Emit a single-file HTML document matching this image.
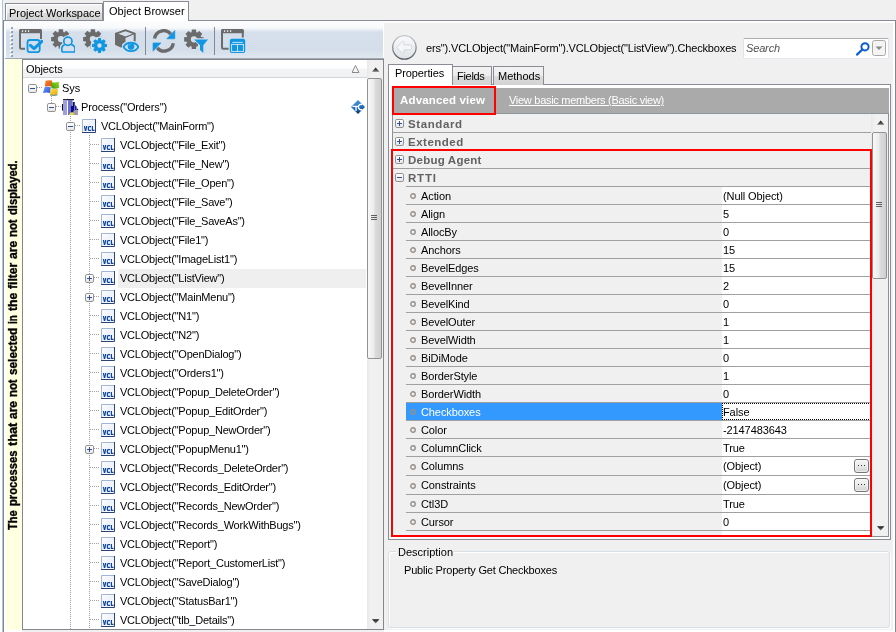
<!DOCTYPE html>
<html><head><meta charset="utf-8"><style>
html,body{margin:0;padding:0;}
body{width:896px;height:632px;position:relative;overflow:hidden;will-change:transform;background:#f0f0f0;font-family:"Liberation Sans", sans-serif;font-size:11px;color:#000;}
body div{position:absolute;}
.t{white-space:nowrap;}
</style></head><body>
<div style="left:0px;top:0px;width:2px;height:632px;background:#ffffff"></div>
<div style="left:2px;top:0px;width:1px;height:632px;background:#a9c7ec"></div>
<div style="left:5px;top:3px;width:98px;height:18px;border:1px solid #898c95;border-bottom:none;box-sizing:border-box;background:linear-gradient(#f3f3f3,#ececec 50%,#dddddd 51%,#d2d2d2);box-shadow:inset 1px 1px 0 #fff"></div>
<div class="t" style="left:9px;top:4px;line-height:18px;letter-spacing:-0.03px">Project Workspace</div>
<div style="left:103px;top:1px;width:86px;height:20px;border:1px solid #898c95;border-bottom:none;box-sizing:border-box;background:#fff"></div>
<div class="t" style="left:109px;top:2px;line-height:18px;letter-spacing:0.03px">Object Browser</div>
<div style="left:3px;top:20px;width:100px;height:1px;background:#898c95"></div>
<div style="left:188px;top:20px;width:708px;height:1px;background:#898c95"></div>
<div style="left:3px;top:20px;width:1px;height:612px;background:#828790"></div>
<div style="left:4px;top:21px;width:1px;height:611px;background:#fff"></div>
<div style="left:4px;top:21px;width:380px;height:38px;background:#fff"></div>
<div style="left:6px;top:21px;width:377px;height:37px;background:linear-gradient(#fcfdfe 0px,#f7f9fb 7px,#e6ecf3 9px,#d6e0ec 11px,#d3deea 28px,#dfe6ef 37px)"></div>
<div style="left:5px;top:58px;width:379px;height:1px;background:#a3a9b3"></div>
<div style="left:10px;top:26px;width:2px;height:2px;background:#ffffff"></div>
<div style="left:11px;top:27px;width:2px;height:2px;background:#98a2b0"></div>
<div style="left:10px;top:30px;width:2px;height:2px;background:#ffffff"></div>
<div style="left:11px;top:31px;width:2px;height:2px;background:#98a2b0"></div>
<div style="left:10px;top:34px;width:2px;height:2px;background:#ffffff"></div>
<div style="left:11px;top:35px;width:2px;height:2px;background:#98a2b0"></div>
<div style="left:10px;top:38px;width:2px;height:2px;background:#ffffff"></div>
<div style="left:11px;top:39px;width:2px;height:2px;background:#98a2b0"></div>
<div style="left:10px;top:42px;width:2px;height:2px;background:#ffffff"></div>
<div style="left:11px;top:43px;width:2px;height:2px;background:#98a2b0"></div>
<div style="left:10px;top:46px;width:2px;height:2px;background:#ffffff"></div>
<div style="left:11px;top:47px;width:2px;height:2px;background:#98a2b0"></div>
<div style="left:10px;top:50px;width:2px;height:2px;background:#ffffff"></div>
<div style="left:11px;top:51px;width:2px;height:2px;background:#98a2b0"></div>
<div style="left:10px;top:54px;width:2px;height:2px;background:#ffffff"></div>
<div style="left:11px;top:55px;width:2px;height:2px;background:#98a2b0"></div>
<div style="left:145px;top:27px;width:1px;height:28px;background:#7f8a98"></div>
<div style="left:214px;top:27px;width:1px;height:28px;background:#7f8a98"></div>
<svg style="position:absolute;left:19px;top:29px;" width="24" height="24" viewBox="0 0 24 24"><path d="M6,19.8 H2.5 Q1,19.8 1,18.3 V2.5 Q1,1 2.5,1 H20.5 Q22,1 22,2.5 V10" fill="none" stroke="#6b6b6b" stroke-width="2"/><rect x="0" y="0" width="23" height="4.2" rx="1.5" fill="#6b6b6b"/><circle cx="3.6" cy="2.1" r="0.8" fill="#fff"/><circle cx="6.6" cy="2.1" r="0.8" fill="#fff"/><circle cx="9.6" cy="2.1" r="0.8" fill="#fff"/><rect x="8.5" y="11" width="12.2" height="12.2" rx="2.5" fill="none" stroke="#1196e3" stroke-width="1.8"/><polyline points="11.4,16.4 15.1,19.6 22.8,12.3" fill="none" stroke="#1196e3" stroke-width="3.1" stroke-linecap="round" stroke-linejoin="round"/></svg>
<svg style="position:absolute;left:51px;top:29px;" width="24" height="24" viewBox="0 0 24 24"><path d="M17.02,7.74 L19.67,7.97 L19.67,12.23 L17.02,12.46 L16.60,13.47 L18.32,15.50 L15.30,18.52 L13.27,16.80 L12.26,17.22 L12.03,19.87 L7.77,19.87 L7.54,17.22 L6.53,16.80 L4.50,18.52 L1.48,15.50 L3.20,13.47 L2.78,12.46 L0.13,12.23 L0.13,7.97 L2.78,7.74 L3.20,6.73 L1.48,4.70 L4.50,1.68 L6.53,3.40 L7.54,2.98 L7.77,0.33 L12.03,0.33 L12.26,2.98 L13.27,3.40 L15.30,1.68 L18.32,4.70 L16.60,6.73 Z M6.80,10.10 a3.1,3.1 0 1,0 6.2,0 a3.1,3.1 0 1,0 -6.2,0 Z" fill="#6b6b6b" fill-rule="evenodd"/><circle cx="16.9" cy="12.2" r="6" fill="#d6e0ec"/><path d="M8.8,25 V19.5 Q8.8,14.5 13,14 H21 Q25.5,14.5 25.5,19.5 V25 Z" fill="#d6e0ec"/><circle cx="16.9" cy="12.2" r="4.1" fill="none" stroke="#1196e3" stroke-width="1.7"/><path d="M13.6,15.7 Q10.8,16.6 10.8,19.8 V21.3 Q10.8,23 12.4,23 H22.4 Q24,23 24,21.3 V19.8 Q24,16.6 20.2,15.7" fill="none" stroke="#1196e3" stroke-width="1.7" stroke-linejoin="round"/></svg>
<svg style="position:absolute;left:83px;top:29px;" width="24" height="24" viewBox="0 0 24 24"><path d="M17.02,7.74 L19.67,7.97 L19.67,12.23 L17.02,12.46 L16.60,13.47 L18.32,15.50 L15.30,18.52 L13.27,16.80 L12.26,17.22 L12.03,19.87 L7.77,19.87 L7.54,17.22 L6.53,16.80 L4.50,18.52 L1.48,15.50 L3.20,13.47 L2.78,12.46 L0.13,12.23 L0.13,7.97 L2.78,7.74 L3.20,6.73 L1.48,4.70 L4.50,1.68 L6.53,3.40 L7.54,2.98 L7.77,0.33 L12.03,0.33 L12.26,2.98 L13.27,3.40 L15.30,1.68 L18.32,4.70 L16.60,6.73 Z M6.80,10.10 a3.1,3.1 0 1,0 6.2,0 a3.1,3.1 0 1,0 -6.2,0 Z" fill="#6b6b6b" fill-rule="evenodd"/><circle cx="16.5" cy="16.5" r="9" fill="#d6e0ec"/><path d="M21.81,14.73 L23.97,15.11 L23.97,17.89 L21.81,18.27 L21.51,19.01 L22.77,20.80 L20.80,22.77 L19.01,21.51 L18.27,21.81 L17.89,23.97 L15.11,23.97 L14.73,21.81 L13.99,21.51 L12.20,22.77 L10.23,20.80 L11.49,19.01 L11.19,18.27 L9.03,17.89 L9.03,15.11 L11.19,14.73 L11.49,13.99 L10.23,12.20 L12.20,10.23 L13.99,11.49 L14.73,11.19 L15.11,9.03 L17.89,9.03 L18.27,11.19 L19.01,11.49 L20.80,10.23 L22.77,12.20 L21.51,13.99 Z M14.30,16.50 a2.2,2.2 0 1,0 4.4,0 a2.2,2.2 0 1,0 -4.4,0 Z" fill="#1196e3" fill-rule="evenodd"/></svg>
<svg style="position:absolute;left:115px;top:29px;" width="24" height="24" viewBox="0 0 24 24"><path d="M10.5,0.3 L20.7,4.1 L20.7,12.5 L18.7,12.5 L18.7,5.6 L10.5,8.9 L2,5.6 L2,14.2 L10.5,17.6 L5.8,18.6 L0,15.8 L0,4.1 Z" fill="#6b6b6b"/><path d="M10.5,2.3 L17.5,4.8 L10.5,7.4 L3.3,4.8 Z" fill="#d6e0ec"/><path d="M0,4.1 L10.5,8 L10.5,13 L8,14.5 L6,17.5 L0,15.8 Z" fill="#6b6b6b"/><ellipse cx="16" cy="17.9" rx="9" ry="6.2" fill="#d6e0ec"/><path d="M8.6,17.9 C11.2,12.3 20.8,12.3 23.4,17.9 C20.8,23.5 11.2,23.5 8.6,17.9 Z" fill="none" stroke="#1196e3" stroke-width="1.9"/><circle cx="16" cy="17.6" r="3.3" fill="#1196e3"/><path d="M13.8,16.8 Q14.2,15.2 15.8,14.8" fill="none" stroke="#7cc3ef" stroke-width="0.6"/></svg>
<svg style="position:absolute;left:152px;top:29px;" width="24" height="24" viewBox="0 0 24 24"><path d="M2.5,9.6 A9.2,9.2 0 0 1 18.8,5.2" fill="none" stroke="#6b6b6b" stroke-width="3.4"/><path d="M22.8,1.5 L22.8,9.8 L14.8,9.8 Z" fill="#1196e3" stroke="#1196e3" stroke-width="0.6" stroke-linejoin="round"/><path d="M21.3,14.2 A9.2,9.2 0 0 1 5.2,18.8" fill="none" stroke="#6b6b6b" stroke-width="3.4"/><path d="M1,13.9 L9,13.9 L1,22.2 Z" fill="#1196e3" stroke="#1196e3" stroke-width="0.6" stroke-linejoin="round"/></svg>
<svg style="position:absolute;left:184px;top:29px;" width="25" height="25" viewBox="0 0 25 25"><path d="M17.02,7.94 L19.67,8.17 L19.67,12.43 L17.02,12.66 L16.60,13.67 L18.32,15.70 L15.30,18.72 L13.27,17.00 L12.26,17.42 L12.03,20.07 L7.77,20.07 L7.54,17.42 L6.53,17.00 L4.50,18.72 L1.48,15.70 L3.20,13.67 L2.78,12.66 L0.13,12.43 L0.13,8.17 L2.78,7.94 L3.20,6.93 L1.48,4.90 L4.50,1.88 L6.53,3.60 L7.54,3.18 L7.77,0.53 L12.03,0.53 L12.26,3.18 L13.27,3.60 L15.30,1.88 L18.32,4.90 L16.60,6.93 Z M6.80,10.30 a3.1,3.1 0 1,0 6.2,0 a3.1,3.1 0 1,0 -6.2,0 Z" fill="#6b6b6b" fill-rule="evenodd"/><path d="M8.2,9.3 L25,9.3 L20.5,15.5 L20.5,25 L14,19.5 L14,15.5 Z" fill="#d6e0ec"/><path d="M10.2,10.5 L24,10.5 L19.3,16.2 L19.3,24 L16,21 L16,16.2 Z" fill="#1196e3"/></svg>
<svg style="position:absolute;left:221px;top:29px;" width="25" height="25" viewBox="0 0 25 25"><path d="M7.6,19.7 H2.5 Q1,19.7 1,18.2 V2.5 Q1,1 2.5,1 H20.3 Q21.8,1 21.8,2.5 V8.6" fill="none" stroke="#6b6b6b" stroke-width="2"/><rect x="0" y="0" width="22.8" height="4.2" rx="1.5" fill="#6b6b6b"/><circle cx="3.6" cy="2.1" r="0.8" fill="#fff"/><circle cx="6.6" cy="2.1" r="0.8" fill="#fff"/><circle cx="9.6" cy="2.1" r="0.8" fill="#fff"/><rect x="8.8" y="9.8" width="15.4" height="14.2" rx="2" fill="#1196e3"/><rect x="11.3" y="12.9" width="10.4" height="0.9" fill="#d8ecf9"/><rect x="10.6" y="15.4" width="11.8" height="7" fill="none" stroke="#d8ecf9" stroke-width="0.9"/><rect x="16" y="15.4" width="0.9" height="7" fill="#d8ecf9"/></svg>
<div style="left:5px;top:59px;width:17px;height:573px;background:#fff"></div>
<div style="left:6px;top:59px;width:16px;height:571px;background:#ffffe1"></div>
<div class="t" style="left:6px;top:59px;width:16px;height:571px;"><div style="position:absolute;left:0;top:0;width:571px;height:16px;transform-origin:0 0;transform:translate(0px,571px) rotate(-90deg);font-weight:bold;font-size:12px;line-height:14px;white-space:nowrap;-webkit-text-stroke:0.35px #000;"><span style="position:absolute;left:100.10px;top:0;transform-origin:0 0;transform:scaleX(0.914)">The</span><span style="position:absolute;left:124.10px;top:0;transform-origin:0 0;transform:scaleX(0.933)">processes</span><span style="position:absolute;left:183.90px;top:0;transform-origin:0 0;transform:scaleX(1.059)">that</span><span style="position:absolute;left:211.30px;top:0;transform-origin:0 0;transform:scaleX(0.994)">are</span><span style="position:absolute;left:232.90px;top:0;transform-origin:0 0;transform:scaleX(0.942)">not</span><span style="position:absolute;left:255.10px;top:0;transform-origin:0 0;transform:scaleX(0.983)">selected</span><span style="position:absolute;left:305.80px;top:0;transform-origin:0 0;transform:scaleX(0.827)">in</span><span style="position:absolute;left:318.90px;top:0;transform-origin:0 0;transform:scaleX(1.017)">the</span><span style="position:absolute;left:340.70px;top:0;transform-origin:0 0;transform:scaleX(1.012)">filter</span><span style="position:absolute;left:371.10px;top:0;transform-origin:0 0;transform:scaleX(1.006)">are</span><span style="position:absolute;left:393.10px;top:0;transform-origin:0 0;transform:scaleX(0.942)">not</span><span style="position:absolute;left:415.10px;top:0;transform-origin:0 0;transform:scaleX(0.932)">displayed.</span></div></div>
<div style="left:22px;top:59px;width:362px;height:571px;border:1px solid #828790;box-sizing:border-box;background:#fff"></div>
<div style="left:23px;top:60px;width:344px;height:17px;background:linear-gradient(#ffffff 0,#ffffff 45%,#f3f4f6 55%,#eff1f3)"></div>
<div style="left:23px;top:77px;width:344px;height:1px;background:#d5d5d5"></div>
<div class="t" style="left:26px;top:60px;line-height:18px;letter-spacing:-0.1px">Objects</div>
<svg style="position:absolute;left:352px;top:65px;" width="8" height="8" viewBox="0 0 8 8"><path d="M3.5,0.5 L7,7.5 L0,7.5 Z" fill="none" stroke="#8a8a8a" stroke-width="1"/></svg>
<div style="left:367px;top:60px;width:16px;height:569px;background:linear-gradient(90deg,#e9e9e9,#f1f1f1 25%,#f0f0f0)"></div>
<svg style="position:absolute;left:372px;top:67px;" width="8" height="5" viewBox="0 0 8 5"><defs><linearGradient id="au" x1="0" y1="0" x2="0" y2="1"><stop offset="0" stop-color="#111"/><stop offset="1" stop-color="#777"/></linearGradient></defs><path d="M0,4.8 L3.7,0.6 L7.4,4.8 Z" fill="url(#au)"/></svg>
<svg style="position:absolute;left:372px;top:619px;" width="8" height="5" viewBox="0 0 8 5"><defs><linearGradient id="ad" x1="0" y1="0" x2="0" y2="1"><stop offset="0" stop-color="#111"/><stop offset="1" stop-color="#888"/></linearGradient></defs><path d="M0,0.2 L7.4,0.2 L3.7,4.6 Z" fill="url(#ad)"/></svg>
<div style="left:367px;top:78px;width:15px;height:281px;border:1px solid #929292;border-radius:2px;box-sizing:border-box;background:linear-gradient(90deg,#f8f8f8,#ececec 45%,#dcdcdc 55%,#cfcfd2)"></div>
<svg style="position:absolute;left:371px;top:215px;" width="6" height="6" viewBox="0 0 6 6"><rect x="0" y="0" width="6" height="1" fill="#333" opacity="0.75"/><rect x="0" y="2" width="6" height="1" fill="#333" opacity="0.75"/><rect x="0" y="4" width="6" height="1" fill="#333" opacity="0.75"/></svg>
<div style="left:51px;top:96px;width:1px;height:7px;background:repeating-linear-gradient(180deg,#a0a0a0 0 1px,transparent 1px 2px)"></div>
<div style="left:70px;top:116px;width:1px;height:513px;background:repeating-linear-gradient(180deg,#a0a0a0 0 1px,transparent 1px 2px)"></div>
<div style="left:89px;top:135px;width:1px;height:494px;background:repeating-linear-gradient(180deg,#a0a0a0 0 1px,transparent 1px 2px)"></div>
<div style="left:37px;top:87px;width:6px;height:1px;background:repeating-linear-gradient(90deg,#a0a0a0 0 1px,transparent 1px 2px)"></div>
<div style="left:56px;top:106px;width:6px;height:1px;background:repeating-linear-gradient(90deg,#a0a0a0 0 1px,transparent 1px 2px)"></div>
<div style="left:75px;top:125px;width:6px;height:1px;background:repeating-linear-gradient(90deg,#a0a0a0 0 1px,transparent 1px 2px)"></div>
<svg style="position:absolute;left:28px;top:84px;" width="9" height="9" viewBox="0 0 9 9"><defs><linearGradient id="eb" x1="0" y1="0" x2="0" y2="1"><stop offset="0" stop-color="#ffffff"/><stop offset="0.5" stop-color="#f4f4f4"/><stop offset="1" stop-color="#e4e4e4"/></linearGradient></defs><rect x="0.5" y="0.5" width="8" height="8" rx="1.3" fill="url(#eb)" stroke="#919191" stroke-width="1"/><rect x="2" y="4" width="5" height="1" fill="#2f4f99"/></svg>
<svg style="position:absolute;left:47px;top:103px;" width="9" height="9" viewBox="0 0 9 9"><defs><linearGradient id="eb" x1="0" y1="0" x2="0" y2="1"><stop offset="0" stop-color="#ffffff"/><stop offset="0.5" stop-color="#f4f4f4"/><stop offset="1" stop-color="#e4e4e4"/></linearGradient></defs><rect x="0.5" y="0.5" width="8" height="8" rx="1.3" fill="url(#eb)" stroke="#919191" stroke-width="1"/><rect x="2" y="4" width="5" height="1" fill="#2f4f99"/></svg>
<svg style="position:absolute;left:66px;top:122px;" width="9" height="9" viewBox="0 0 9 9"><defs><linearGradient id="eb" x1="0" y1="0" x2="0" y2="1"><stop offset="0" stop-color="#ffffff"/><stop offset="0.5" stop-color="#f4f4f4"/><stop offset="1" stop-color="#e4e4e4"/></linearGradient></defs><rect x="0.5" y="0.5" width="8" height="8" rx="1.3" fill="url(#eb)" stroke="#919191" stroke-width="1"/><rect x="2" y="4" width="5" height="1" fill="#2f4f99"/></svg>
<svg style="position:absolute;left:43px;top:80px;" width="17" height="17" viewBox="0 0 17 17"><defs><linearGradient id="wo" x1="0" y1="0" x2="1" y2="1"><stop offset="0" stop-color="#f8862c"/><stop offset="1" stop-color="#e34f12"/></linearGradient><linearGradient id="wg" x1="1" y1="0" x2="0" y2="1"><stop offset="0" stop-color="#95e21b"/><stop offset="1" stop-color="#3f9413"/></linearGradient><linearGradient id="wb" x1="0" y1="0" x2="1" y2="1"><stop offset="0" stop-color="#6f9cf6"/><stop offset="1" stop-color="#2453e0"/></linearGradient><linearGradient id="wy" x1="0" y1="0" x2="1" y2="1"><stop offset="0" stop-color="#fde047"/><stop offset="1" stop-color="#e3a90c"/></linearGradient></defs><path d="M2.5,0.8 Q5.5,-0.3 9,0.5 L9.1,6.4 Q5.5,5.8 1.9,6.6 Z" fill="url(#wo)"/><path d="M8.6,2 Q12,3.2 15.8,1.8 L16,8 Q12.3,9.2 8.3,8.3 Z" fill="url(#wg)"/><path d="M1.7,7 Q4.5,6.4 7.8,7.3 L7.3,13 Q3.8,12.2 0,12.9 Z" fill="url(#wb)"/><path d="M7.7,8.6 Q11.2,9.6 14.8,8.8 L14.4,14.6 Q10.7,15.8 6.9,14.6 Z" fill="url(#wy)"/><path d="M7,14.9 Q10.7,16.1 14.4,14.9" fill="none" stroke="#1d5f6e" stroke-width="0.9" opacity="0.8"/></svg>
<svg style="position:absolute;left:62px;top:98px;" width="17" height="18" viewBox="0 0 17 18"><rect x="1" y="1" width="11" height="1.2" fill="#111"/><rect x="0" y="6" width="1" height="6.6" fill="#111"/><rect x="1" y="1.8" width="4" height="15.2" fill="#9a9de6"/><rect x="6" y="1.8" width="4.5" height="15.2" fill="#6d70c0"/><rect x="9" y="8" width="2" height="6.4" fill="#0a0a8a"/><rect x="10.8" y="4" width="1.9" height="10.4" fill="#06067a"/><path d="M12.9,7 L14.6,8.6 L14.6,12.6 L12.9,12.6 Z" fill="#0c0c90"/><rect x="14.8" y="10.8" width="1.4" height="1.6" fill="#0a0a8a"/><rect x="12.7" y="8" width="0.4" height="4.6" fill="#d8d8f0"/><rect x="11.3" y="12.6" width="4.7" height="4.4" fill="#9e9e9e"/><path d="M7,17 Q8,14 9.5,14.4 L11,14.4 L11,17 Z" fill="#e8d84a"/></svg>
<svg style="position:absolute;left:82px;top:119px;" width="14" height="14" viewBox="0 0 14 14"><defs><linearGradient id="vg" x1="0" y1="0" x2="1" y2="1"><stop offset="0" stop-color="#ffffff"/><stop offset="0.5" stop-color="#eef2f9"/><stop offset="1" stop-color="#ffffff"/></linearGradient></defs><rect x="0" y="0" width="14" height="14" fill="url(#vg)"/><path d="M0.5,13.5 V0.5 H13.5" fill="none" stroke="#a3b5d3" stroke-width="1"/><path d="M0,13.5 H13.5 V0" fill="none" stroke="#2d4270" stroke-width="1"/><path d="M1.8,7 H3.05 L3.55,9.9 L4.05,7 H5.3 L4.2,12 H2.9 Z" fill="#0b45a3"/><path d="M9,7.6 H7.4 Q6.4,7.6 6.4,8.6 V10.4 Q6.4,11.4 7.4,11.4 H9" fill="none" stroke="#0b45a3" stroke-width="1.25"/><path d="M10.4,7 V11.4 H12.6" fill="none" stroke="#0b45a3" stroke-width="1.25"/></svg>
<svg style="position:absolute;left:351px;top:100px;" width="14" height="14" viewBox="0 0 14 14"><defs><linearGradient id="tg" x1="0.2" y1="0" x2="0.5" y2="1"><stop offset="0" stop-color="#4a9be0"/><stop offset="0.6" stop-color="#1f6fc0"/><stop offset="1" stop-color="#0a2f60"/></linearGradient></defs><path d="M7,0 L14,7 L7,14 L0,7 Z" fill="url(#tg)"/><path d="M1.4,5.8 H7.2 V7.1 H5.7 V11 H4.4 V7.1 H1.4 Z" fill="#fff"/><path d="M11.3,4.6 A2.7,2.7 0 1 0 11.3,9.4" fill="none" stroke="#fff" stroke-width="1.4"/></svg>
<div class="t" style="left:62px;top:79px;line-height:19px;letter-spacing:-0.1px">Sys</div>
<div class="t" style="left:81px;top:98px;line-height:19px;letter-spacing:-0.15px">Process(&quot;Orders&quot;)</div>
<div class="t" style="left:101px;top:117px;line-height:19px;letter-spacing:-0.22px">VCLObject(&quot;MainForm&quot;)</div>
<div style="left:90px;top:144px;width:10px;height:1px;background:repeating-linear-gradient(90deg,#a0a0a0 0 1px,transparent 1px 2px)"></div>
<svg style="position:absolute;left:101px;top:138px;" width="14" height="14" viewBox="0 0 14 14"><defs><linearGradient id="vg" x1="0" y1="0" x2="1" y2="1"><stop offset="0" stop-color="#ffffff"/><stop offset="0.5" stop-color="#eef2f9"/><stop offset="1" stop-color="#ffffff"/></linearGradient></defs><rect x="0" y="0" width="14" height="14" fill="url(#vg)"/><path d="M0.5,13.5 V0.5 H13.5" fill="none" stroke="#a3b5d3" stroke-width="1"/><path d="M0,13.5 H13.5 V0" fill="none" stroke="#2d4270" stroke-width="1"/><path d="M1.8,7 H3.05 L3.55,9.9 L4.05,7 H5.3 L4.2,12 H2.9 Z" fill="#0b45a3"/><path d="M9,7.6 H7.4 Q6.4,7.6 6.4,8.6 V10.4 Q6.4,11.4 7.4,11.4 H9" fill="none" stroke="#0b45a3" stroke-width="1.25"/><path d="M10.4,7 V11.4 H12.6" fill="none" stroke="#0b45a3" stroke-width="1.25"/></svg>
<div class="t" style="left:120px;top:136px;line-height:19px;letter-spacing:-0.22px">VCLObject(&quot;File_Exit&quot;)</div>
<div style="left:90px;top:163px;width:10px;height:1px;background:repeating-linear-gradient(90deg,#a0a0a0 0 1px,transparent 1px 2px)"></div>
<svg style="position:absolute;left:101px;top:157px;" width="14" height="14" viewBox="0 0 14 14"><defs><linearGradient id="vg" x1="0" y1="0" x2="1" y2="1"><stop offset="0" stop-color="#ffffff"/><stop offset="0.5" stop-color="#eef2f9"/><stop offset="1" stop-color="#ffffff"/></linearGradient></defs><rect x="0" y="0" width="14" height="14" fill="url(#vg)"/><path d="M0.5,13.5 V0.5 H13.5" fill="none" stroke="#a3b5d3" stroke-width="1"/><path d="M0,13.5 H13.5 V0" fill="none" stroke="#2d4270" stroke-width="1"/><path d="M1.8,7 H3.05 L3.55,9.9 L4.05,7 H5.3 L4.2,12 H2.9 Z" fill="#0b45a3"/><path d="M9,7.6 H7.4 Q6.4,7.6 6.4,8.6 V10.4 Q6.4,11.4 7.4,11.4 H9" fill="none" stroke="#0b45a3" stroke-width="1.25"/><path d="M10.4,7 V11.4 H12.6" fill="none" stroke="#0b45a3" stroke-width="1.25"/></svg>
<div class="t" style="left:120px;top:155px;line-height:19px;letter-spacing:-0.22px">VCLObject(&quot;File_New&quot;)</div>
<div style="left:90px;top:182px;width:10px;height:1px;background:repeating-linear-gradient(90deg,#a0a0a0 0 1px,transparent 1px 2px)"></div>
<svg style="position:absolute;left:101px;top:176px;" width="14" height="14" viewBox="0 0 14 14"><defs><linearGradient id="vg" x1="0" y1="0" x2="1" y2="1"><stop offset="0" stop-color="#ffffff"/><stop offset="0.5" stop-color="#eef2f9"/><stop offset="1" stop-color="#ffffff"/></linearGradient></defs><rect x="0" y="0" width="14" height="14" fill="url(#vg)"/><path d="M0.5,13.5 V0.5 H13.5" fill="none" stroke="#a3b5d3" stroke-width="1"/><path d="M0,13.5 H13.5 V0" fill="none" stroke="#2d4270" stroke-width="1"/><path d="M1.8,7 H3.05 L3.55,9.9 L4.05,7 H5.3 L4.2,12 H2.9 Z" fill="#0b45a3"/><path d="M9,7.6 H7.4 Q6.4,7.6 6.4,8.6 V10.4 Q6.4,11.4 7.4,11.4 H9" fill="none" stroke="#0b45a3" stroke-width="1.25"/><path d="M10.4,7 V11.4 H12.6" fill="none" stroke="#0b45a3" stroke-width="1.25"/></svg>
<div class="t" style="left:120px;top:174px;line-height:19px;letter-spacing:-0.22px">VCLObject(&quot;File_Open&quot;)</div>
<div style="left:90px;top:201px;width:10px;height:1px;background:repeating-linear-gradient(90deg,#a0a0a0 0 1px,transparent 1px 2px)"></div>
<svg style="position:absolute;left:101px;top:195px;" width="14" height="14" viewBox="0 0 14 14"><defs><linearGradient id="vg" x1="0" y1="0" x2="1" y2="1"><stop offset="0" stop-color="#ffffff"/><stop offset="0.5" stop-color="#eef2f9"/><stop offset="1" stop-color="#ffffff"/></linearGradient></defs><rect x="0" y="0" width="14" height="14" fill="url(#vg)"/><path d="M0.5,13.5 V0.5 H13.5" fill="none" stroke="#a3b5d3" stroke-width="1"/><path d="M0,13.5 H13.5 V0" fill="none" stroke="#2d4270" stroke-width="1"/><path d="M1.8,7 H3.05 L3.55,9.9 L4.05,7 H5.3 L4.2,12 H2.9 Z" fill="#0b45a3"/><path d="M9,7.6 H7.4 Q6.4,7.6 6.4,8.6 V10.4 Q6.4,11.4 7.4,11.4 H9" fill="none" stroke="#0b45a3" stroke-width="1.25"/><path d="M10.4,7 V11.4 H12.6" fill="none" stroke="#0b45a3" stroke-width="1.25"/></svg>
<div class="t" style="left:120px;top:193px;line-height:19px;letter-spacing:-0.22px">VCLObject(&quot;File_Save&quot;)</div>
<div style="left:90px;top:220px;width:10px;height:1px;background:repeating-linear-gradient(90deg,#a0a0a0 0 1px,transparent 1px 2px)"></div>
<svg style="position:absolute;left:101px;top:214px;" width="14" height="14" viewBox="0 0 14 14"><defs><linearGradient id="vg" x1="0" y1="0" x2="1" y2="1"><stop offset="0" stop-color="#ffffff"/><stop offset="0.5" stop-color="#eef2f9"/><stop offset="1" stop-color="#ffffff"/></linearGradient></defs><rect x="0" y="0" width="14" height="14" fill="url(#vg)"/><path d="M0.5,13.5 V0.5 H13.5" fill="none" stroke="#a3b5d3" stroke-width="1"/><path d="M0,13.5 H13.5 V0" fill="none" stroke="#2d4270" stroke-width="1"/><path d="M1.8,7 H3.05 L3.55,9.9 L4.05,7 H5.3 L4.2,12 H2.9 Z" fill="#0b45a3"/><path d="M9,7.6 H7.4 Q6.4,7.6 6.4,8.6 V10.4 Q6.4,11.4 7.4,11.4 H9" fill="none" stroke="#0b45a3" stroke-width="1.25"/><path d="M10.4,7 V11.4 H12.6" fill="none" stroke="#0b45a3" stroke-width="1.25"/></svg>
<div class="t" style="left:120px;top:212px;line-height:19px;letter-spacing:-0.22px">VCLObject(&quot;File_SaveAs&quot;)</div>
<div style="left:90px;top:239px;width:10px;height:1px;background:repeating-linear-gradient(90deg,#a0a0a0 0 1px,transparent 1px 2px)"></div>
<svg style="position:absolute;left:101px;top:233px;" width="14" height="14" viewBox="0 0 14 14"><defs><linearGradient id="vg" x1="0" y1="0" x2="1" y2="1"><stop offset="0" stop-color="#ffffff"/><stop offset="0.5" stop-color="#eef2f9"/><stop offset="1" stop-color="#ffffff"/></linearGradient></defs><rect x="0" y="0" width="14" height="14" fill="url(#vg)"/><path d="M0.5,13.5 V0.5 H13.5" fill="none" stroke="#a3b5d3" stroke-width="1"/><path d="M0,13.5 H13.5 V0" fill="none" stroke="#2d4270" stroke-width="1"/><path d="M1.8,7 H3.05 L3.55,9.9 L4.05,7 H5.3 L4.2,12 H2.9 Z" fill="#0b45a3"/><path d="M9,7.6 H7.4 Q6.4,7.6 6.4,8.6 V10.4 Q6.4,11.4 7.4,11.4 H9" fill="none" stroke="#0b45a3" stroke-width="1.25"/><path d="M10.4,7 V11.4 H12.6" fill="none" stroke="#0b45a3" stroke-width="1.25"/></svg>
<div class="t" style="left:120px;top:231px;line-height:19px;letter-spacing:-0.22px">VCLObject(&quot;File1&quot;)</div>
<div style="left:90px;top:258px;width:10px;height:1px;background:repeating-linear-gradient(90deg,#a0a0a0 0 1px,transparent 1px 2px)"></div>
<svg style="position:absolute;left:101px;top:252px;" width="14" height="14" viewBox="0 0 14 14"><defs><linearGradient id="vg" x1="0" y1="0" x2="1" y2="1"><stop offset="0" stop-color="#ffffff"/><stop offset="0.5" stop-color="#eef2f9"/><stop offset="1" stop-color="#ffffff"/></linearGradient></defs><rect x="0" y="0" width="14" height="14" fill="url(#vg)"/><path d="M0.5,13.5 V0.5 H13.5" fill="none" stroke="#a3b5d3" stroke-width="1"/><path d="M0,13.5 H13.5 V0" fill="none" stroke="#2d4270" stroke-width="1"/><path d="M1.8,7 H3.05 L3.55,9.9 L4.05,7 H5.3 L4.2,12 H2.9 Z" fill="#0b45a3"/><path d="M9,7.6 H7.4 Q6.4,7.6 6.4,8.6 V10.4 Q6.4,11.4 7.4,11.4 H9" fill="none" stroke="#0b45a3" stroke-width="1.25"/><path d="M10.4,7 V11.4 H12.6" fill="none" stroke="#0b45a3" stroke-width="1.25"/></svg>
<div class="t" style="left:120px;top:250px;line-height:19px;letter-spacing:-0.22px">VCLObject(&quot;ImageList1&quot;)</div>
<div style="left:118px;top:269px;width:248px;height:19px;background:#efefef"></div>
<svg style="position:absolute;left:85px;top:274px;" width="9" height="9" viewBox="0 0 9 9"><defs><linearGradient id="eb" x1="0" y1="0" x2="0" y2="1"><stop offset="0" stop-color="#ffffff"/><stop offset="0.5" stop-color="#f4f4f4"/><stop offset="1" stop-color="#e4e4e4"/></linearGradient></defs><rect x="0.5" y="0.5" width="8" height="8" rx="1.3" fill="url(#eb)" stroke="#919191" stroke-width="1"/><rect x="2" y="4" width="5" height="1" fill="#2f4f99"/><rect x="4" y="2" width="1" height="5" fill="#2f4f99"/></svg>
<div style="left:94px;top:277px;width:6px;height:1px;background:repeating-linear-gradient(90deg,#a0a0a0 0 1px,transparent 1px 2px)"></div>
<svg style="position:absolute;left:101px;top:271px;" width="14" height="14" viewBox="0 0 14 14"><defs><linearGradient id="vg" x1="0" y1="0" x2="1" y2="1"><stop offset="0" stop-color="#ffffff"/><stop offset="0.5" stop-color="#eef2f9"/><stop offset="1" stop-color="#ffffff"/></linearGradient></defs><rect x="0" y="0" width="14" height="14" fill="url(#vg)"/><path d="M0.5,13.5 V0.5 H13.5" fill="none" stroke="#a3b5d3" stroke-width="1"/><path d="M0,13.5 H13.5 V0" fill="none" stroke="#2d4270" stroke-width="1"/><path d="M1.8,7 H3.05 L3.55,9.9 L4.05,7 H5.3 L4.2,12 H2.9 Z" fill="#0b45a3"/><path d="M9,7.6 H7.4 Q6.4,7.6 6.4,8.6 V10.4 Q6.4,11.4 7.4,11.4 H9" fill="none" stroke="#0b45a3" stroke-width="1.25"/><path d="M10.4,7 V11.4 H12.6" fill="none" stroke="#0b45a3" stroke-width="1.25"/></svg>
<div class="t" style="left:120px;top:269px;line-height:19px;letter-spacing:-0.22px">VCLObject(&quot;ListView&quot;)</div>
<svg style="position:absolute;left:85px;top:293px;" width="9" height="9" viewBox="0 0 9 9"><defs><linearGradient id="eb" x1="0" y1="0" x2="0" y2="1"><stop offset="0" stop-color="#ffffff"/><stop offset="0.5" stop-color="#f4f4f4"/><stop offset="1" stop-color="#e4e4e4"/></linearGradient></defs><rect x="0.5" y="0.5" width="8" height="8" rx="1.3" fill="url(#eb)" stroke="#919191" stroke-width="1"/><rect x="2" y="4" width="5" height="1" fill="#2f4f99"/><rect x="4" y="2" width="1" height="5" fill="#2f4f99"/></svg>
<div style="left:94px;top:296px;width:6px;height:1px;background:repeating-linear-gradient(90deg,#a0a0a0 0 1px,transparent 1px 2px)"></div>
<svg style="position:absolute;left:101px;top:290px;" width="14" height="14" viewBox="0 0 14 14"><defs><linearGradient id="vg" x1="0" y1="0" x2="1" y2="1"><stop offset="0" stop-color="#ffffff"/><stop offset="0.5" stop-color="#eef2f9"/><stop offset="1" stop-color="#ffffff"/></linearGradient></defs><rect x="0" y="0" width="14" height="14" fill="url(#vg)"/><path d="M0.5,13.5 V0.5 H13.5" fill="none" stroke="#a3b5d3" stroke-width="1"/><path d="M0,13.5 H13.5 V0" fill="none" stroke="#2d4270" stroke-width="1"/><path d="M1.8,7 H3.05 L3.55,9.9 L4.05,7 H5.3 L4.2,12 H2.9 Z" fill="#0b45a3"/><path d="M9,7.6 H7.4 Q6.4,7.6 6.4,8.6 V10.4 Q6.4,11.4 7.4,11.4 H9" fill="none" stroke="#0b45a3" stroke-width="1.25"/><path d="M10.4,7 V11.4 H12.6" fill="none" stroke="#0b45a3" stroke-width="1.25"/></svg>
<div class="t" style="left:120px;top:288px;line-height:19px;letter-spacing:-0.22px">VCLObject(&quot;MainMenu&quot;)</div>
<div style="left:90px;top:315px;width:10px;height:1px;background:repeating-linear-gradient(90deg,#a0a0a0 0 1px,transparent 1px 2px)"></div>
<svg style="position:absolute;left:101px;top:309px;" width="14" height="14" viewBox="0 0 14 14"><defs><linearGradient id="vg" x1="0" y1="0" x2="1" y2="1"><stop offset="0" stop-color="#ffffff"/><stop offset="0.5" stop-color="#eef2f9"/><stop offset="1" stop-color="#ffffff"/></linearGradient></defs><rect x="0" y="0" width="14" height="14" fill="url(#vg)"/><path d="M0.5,13.5 V0.5 H13.5" fill="none" stroke="#a3b5d3" stroke-width="1"/><path d="M0,13.5 H13.5 V0" fill="none" stroke="#2d4270" stroke-width="1"/><path d="M1.8,7 H3.05 L3.55,9.9 L4.05,7 H5.3 L4.2,12 H2.9 Z" fill="#0b45a3"/><path d="M9,7.6 H7.4 Q6.4,7.6 6.4,8.6 V10.4 Q6.4,11.4 7.4,11.4 H9" fill="none" stroke="#0b45a3" stroke-width="1.25"/><path d="M10.4,7 V11.4 H12.6" fill="none" stroke="#0b45a3" stroke-width="1.25"/></svg>
<div class="t" style="left:120px;top:307px;line-height:19px;letter-spacing:-0.22px">VCLObject(&quot;N1&quot;)</div>
<div style="left:90px;top:334px;width:10px;height:1px;background:repeating-linear-gradient(90deg,#a0a0a0 0 1px,transparent 1px 2px)"></div>
<svg style="position:absolute;left:101px;top:328px;" width="14" height="14" viewBox="0 0 14 14"><defs><linearGradient id="vg" x1="0" y1="0" x2="1" y2="1"><stop offset="0" stop-color="#ffffff"/><stop offset="0.5" stop-color="#eef2f9"/><stop offset="1" stop-color="#ffffff"/></linearGradient></defs><rect x="0" y="0" width="14" height="14" fill="url(#vg)"/><path d="M0.5,13.5 V0.5 H13.5" fill="none" stroke="#a3b5d3" stroke-width="1"/><path d="M0,13.5 H13.5 V0" fill="none" stroke="#2d4270" stroke-width="1"/><path d="M1.8,7 H3.05 L3.55,9.9 L4.05,7 H5.3 L4.2,12 H2.9 Z" fill="#0b45a3"/><path d="M9,7.6 H7.4 Q6.4,7.6 6.4,8.6 V10.4 Q6.4,11.4 7.4,11.4 H9" fill="none" stroke="#0b45a3" stroke-width="1.25"/><path d="M10.4,7 V11.4 H12.6" fill="none" stroke="#0b45a3" stroke-width="1.25"/></svg>
<div class="t" style="left:120px;top:326px;line-height:19px;letter-spacing:-0.22px">VCLObject(&quot;N2&quot;)</div>
<div style="left:90px;top:353px;width:10px;height:1px;background:repeating-linear-gradient(90deg,#a0a0a0 0 1px,transparent 1px 2px)"></div>
<svg style="position:absolute;left:101px;top:347px;" width="14" height="14" viewBox="0 0 14 14"><defs><linearGradient id="vg" x1="0" y1="0" x2="1" y2="1"><stop offset="0" stop-color="#ffffff"/><stop offset="0.5" stop-color="#eef2f9"/><stop offset="1" stop-color="#ffffff"/></linearGradient></defs><rect x="0" y="0" width="14" height="14" fill="url(#vg)"/><path d="M0.5,13.5 V0.5 H13.5" fill="none" stroke="#a3b5d3" stroke-width="1"/><path d="M0,13.5 H13.5 V0" fill="none" stroke="#2d4270" stroke-width="1"/><path d="M1.8,7 H3.05 L3.55,9.9 L4.05,7 H5.3 L4.2,12 H2.9 Z" fill="#0b45a3"/><path d="M9,7.6 H7.4 Q6.4,7.6 6.4,8.6 V10.4 Q6.4,11.4 7.4,11.4 H9" fill="none" stroke="#0b45a3" stroke-width="1.25"/><path d="M10.4,7 V11.4 H12.6" fill="none" stroke="#0b45a3" stroke-width="1.25"/></svg>
<div class="t" style="left:120px;top:345px;line-height:19px;letter-spacing:-0.22px">VCLObject(&quot;OpenDialog&quot;)</div>
<div style="left:90px;top:372px;width:10px;height:1px;background:repeating-linear-gradient(90deg,#a0a0a0 0 1px,transparent 1px 2px)"></div>
<svg style="position:absolute;left:101px;top:366px;" width="14" height="14" viewBox="0 0 14 14"><defs><linearGradient id="vg" x1="0" y1="0" x2="1" y2="1"><stop offset="0" stop-color="#ffffff"/><stop offset="0.5" stop-color="#eef2f9"/><stop offset="1" stop-color="#ffffff"/></linearGradient></defs><rect x="0" y="0" width="14" height="14" fill="url(#vg)"/><path d="M0.5,13.5 V0.5 H13.5" fill="none" stroke="#a3b5d3" stroke-width="1"/><path d="M0,13.5 H13.5 V0" fill="none" stroke="#2d4270" stroke-width="1"/><path d="M1.8,7 H3.05 L3.55,9.9 L4.05,7 H5.3 L4.2,12 H2.9 Z" fill="#0b45a3"/><path d="M9,7.6 H7.4 Q6.4,7.6 6.4,8.6 V10.4 Q6.4,11.4 7.4,11.4 H9" fill="none" stroke="#0b45a3" stroke-width="1.25"/><path d="M10.4,7 V11.4 H12.6" fill="none" stroke="#0b45a3" stroke-width="1.25"/></svg>
<div class="t" style="left:120px;top:364px;line-height:19px;letter-spacing:-0.22px">VCLObject(&quot;Orders1&quot;)</div>
<div style="left:90px;top:391px;width:10px;height:1px;background:repeating-linear-gradient(90deg,#a0a0a0 0 1px,transparent 1px 2px)"></div>
<svg style="position:absolute;left:101px;top:385px;" width="14" height="14" viewBox="0 0 14 14"><defs><linearGradient id="vg" x1="0" y1="0" x2="1" y2="1"><stop offset="0" stop-color="#ffffff"/><stop offset="0.5" stop-color="#eef2f9"/><stop offset="1" stop-color="#ffffff"/></linearGradient></defs><rect x="0" y="0" width="14" height="14" fill="url(#vg)"/><path d="M0.5,13.5 V0.5 H13.5" fill="none" stroke="#a3b5d3" stroke-width="1"/><path d="M0,13.5 H13.5 V0" fill="none" stroke="#2d4270" stroke-width="1"/><path d="M1.8,7 H3.05 L3.55,9.9 L4.05,7 H5.3 L4.2,12 H2.9 Z" fill="#0b45a3"/><path d="M9,7.6 H7.4 Q6.4,7.6 6.4,8.6 V10.4 Q6.4,11.4 7.4,11.4 H9" fill="none" stroke="#0b45a3" stroke-width="1.25"/><path d="M10.4,7 V11.4 H12.6" fill="none" stroke="#0b45a3" stroke-width="1.25"/></svg>
<div class="t" style="left:120px;top:383px;line-height:19px;letter-spacing:-0.22px">VCLObject(&quot;Popup_DeleteOrder&quot;)</div>
<div style="left:90px;top:410px;width:10px;height:1px;background:repeating-linear-gradient(90deg,#a0a0a0 0 1px,transparent 1px 2px)"></div>
<svg style="position:absolute;left:101px;top:404px;" width="14" height="14" viewBox="0 0 14 14"><defs><linearGradient id="vg" x1="0" y1="0" x2="1" y2="1"><stop offset="0" stop-color="#ffffff"/><stop offset="0.5" stop-color="#eef2f9"/><stop offset="1" stop-color="#ffffff"/></linearGradient></defs><rect x="0" y="0" width="14" height="14" fill="url(#vg)"/><path d="M0.5,13.5 V0.5 H13.5" fill="none" stroke="#a3b5d3" stroke-width="1"/><path d="M0,13.5 H13.5 V0" fill="none" stroke="#2d4270" stroke-width="1"/><path d="M1.8,7 H3.05 L3.55,9.9 L4.05,7 H5.3 L4.2,12 H2.9 Z" fill="#0b45a3"/><path d="M9,7.6 H7.4 Q6.4,7.6 6.4,8.6 V10.4 Q6.4,11.4 7.4,11.4 H9" fill="none" stroke="#0b45a3" stroke-width="1.25"/><path d="M10.4,7 V11.4 H12.6" fill="none" stroke="#0b45a3" stroke-width="1.25"/></svg>
<div class="t" style="left:120px;top:402px;line-height:19px;letter-spacing:-0.22px">VCLObject(&quot;Popup_EditOrder&quot;)</div>
<div style="left:90px;top:429px;width:10px;height:1px;background:repeating-linear-gradient(90deg,#a0a0a0 0 1px,transparent 1px 2px)"></div>
<svg style="position:absolute;left:101px;top:423px;" width="14" height="14" viewBox="0 0 14 14"><defs><linearGradient id="vg" x1="0" y1="0" x2="1" y2="1"><stop offset="0" stop-color="#ffffff"/><stop offset="0.5" stop-color="#eef2f9"/><stop offset="1" stop-color="#ffffff"/></linearGradient></defs><rect x="0" y="0" width="14" height="14" fill="url(#vg)"/><path d="M0.5,13.5 V0.5 H13.5" fill="none" stroke="#a3b5d3" stroke-width="1"/><path d="M0,13.5 H13.5 V0" fill="none" stroke="#2d4270" stroke-width="1"/><path d="M1.8,7 H3.05 L3.55,9.9 L4.05,7 H5.3 L4.2,12 H2.9 Z" fill="#0b45a3"/><path d="M9,7.6 H7.4 Q6.4,7.6 6.4,8.6 V10.4 Q6.4,11.4 7.4,11.4 H9" fill="none" stroke="#0b45a3" stroke-width="1.25"/><path d="M10.4,7 V11.4 H12.6" fill="none" stroke="#0b45a3" stroke-width="1.25"/></svg>
<div class="t" style="left:120px;top:421px;line-height:19px;letter-spacing:-0.22px">VCLObject(&quot;Popup_NewOrder&quot;)</div>
<svg style="position:absolute;left:85px;top:445px;" width="9" height="9" viewBox="0 0 9 9"><defs><linearGradient id="eb" x1="0" y1="0" x2="0" y2="1"><stop offset="0" stop-color="#ffffff"/><stop offset="0.5" stop-color="#f4f4f4"/><stop offset="1" stop-color="#e4e4e4"/></linearGradient></defs><rect x="0.5" y="0.5" width="8" height="8" rx="1.3" fill="url(#eb)" stroke="#919191" stroke-width="1"/><rect x="2" y="4" width="5" height="1" fill="#2f4f99"/><rect x="4" y="2" width="1" height="5" fill="#2f4f99"/></svg>
<div style="left:94px;top:448px;width:6px;height:1px;background:repeating-linear-gradient(90deg,#a0a0a0 0 1px,transparent 1px 2px)"></div>
<svg style="position:absolute;left:101px;top:442px;" width="14" height="14" viewBox="0 0 14 14"><defs><linearGradient id="vg" x1="0" y1="0" x2="1" y2="1"><stop offset="0" stop-color="#ffffff"/><stop offset="0.5" stop-color="#eef2f9"/><stop offset="1" stop-color="#ffffff"/></linearGradient></defs><rect x="0" y="0" width="14" height="14" fill="url(#vg)"/><path d="M0.5,13.5 V0.5 H13.5" fill="none" stroke="#a3b5d3" stroke-width="1"/><path d="M0,13.5 H13.5 V0" fill="none" stroke="#2d4270" stroke-width="1"/><path d="M1.8,7 H3.05 L3.55,9.9 L4.05,7 H5.3 L4.2,12 H2.9 Z" fill="#0b45a3"/><path d="M9,7.6 H7.4 Q6.4,7.6 6.4,8.6 V10.4 Q6.4,11.4 7.4,11.4 H9" fill="none" stroke="#0b45a3" stroke-width="1.25"/><path d="M10.4,7 V11.4 H12.6" fill="none" stroke="#0b45a3" stroke-width="1.25"/></svg>
<div class="t" style="left:120px;top:440px;line-height:19px;letter-spacing:-0.22px">VCLObject(&quot;PopupMenu1&quot;)</div>
<div style="left:90px;top:467px;width:10px;height:1px;background:repeating-linear-gradient(90deg,#a0a0a0 0 1px,transparent 1px 2px)"></div>
<svg style="position:absolute;left:101px;top:461px;" width="14" height="14" viewBox="0 0 14 14"><defs><linearGradient id="vg" x1="0" y1="0" x2="1" y2="1"><stop offset="0" stop-color="#ffffff"/><stop offset="0.5" stop-color="#eef2f9"/><stop offset="1" stop-color="#ffffff"/></linearGradient></defs><rect x="0" y="0" width="14" height="14" fill="url(#vg)"/><path d="M0.5,13.5 V0.5 H13.5" fill="none" stroke="#a3b5d3" stroke-width="1"/><path d="M0,13.5 H13.5 V0" fill="none" stroke="#2d4270" stroke-width="1"/><path d="M1.8,7 H3.05 L3.55,9.9 L4.05,7 H5.3 L4.2,12 H2.9 Z" fill="#0b45a3"/><path d="M9,7.6 H7.4 Q6.4,7.6 6.4,8.6 V10.4 Q6.4,11.4 7.4,11.4 H9" fill="none" stroke="#0b45a3" stroke-width="1.25"/><path d="M10.4,7 V11.4 H12.6" fill="none" stroke="#0b45a3" stroke-width="1.25"/></svg>
<div class="t" style="left:120px;top:459px;line-height:19px;letter-spacing:-0.22px">VCLObject(&quot;Records_DeleteOrder&quot;)</div>
<div style="left:90px;top:486px;width:10px;height:1px;background:repeating-linear-gradient(90deg,#a0a0a0 0 1px,transparent 1px 2px)"></div>
<svg style="position:absolute;left:101px;top:480px;" width="14" height="14" viewBox="0 0 14 14"><defs><linearGradient id="vg" x1="0" y1="0" x2="1" y2="1"><stop offset="0" stop-color="#ffffff"/><stop offset="0.5" stop-color="#eef2f9"/><stop offset="1" stop-color="#ffffff"/></linearGradient></defs><rect x="0" y="0" width="14" height="14" fill="url(#vg)"/><path d="M0.5,13.5 V0.5 H13.5" fill="none" stroke="#a3b5d3" stroke-width="1"/><path d="M0,13.5 H13.5 V0" fill="none" stroke="#2d4270" stroke-width="1"/><path d="M1.8,7 H3.05 L3.55,9.9 L4.05,7 H5.3 L4.2,12 H2.9 Z" fill="#0b45a3"/><path d="M9,7.6 H7.4 Q6.4,7.6 6.4,8.6 V10.4 Q6.4,11.4 7.4,11.4 H9" fill="none" stroke="#0b45a3" stroke-width="1.25"/><path d="M10.4,7 V11.4 H12.6" fill="none" stroke="#0b45a3" stroke-width="1.25"/></svg>
<div class="t" style="left:120px;top:478px;line-height:19px;letter-spacing:-0.22px">VCLObject(&quot;Records_EditOrder&quot;)</div>
<div style="left:90px;top:505px;width:10px;height:1px;background:repeating-linear-gradient(90deg,#a0a0a0 0 1px,transparent 1px 2px)"></div>
<svg style="position:absolute;left:101px;top:499px;" width="14" height="14" viewBox="0 0 14 14"><defs><linearGradient id="vg" x1="0" y1="0" x2="1" y2="1"><stop offset="0" stop-color="#ffffff"/><stop offset="0.5" stop-color="#eef2f9"/><stop offset="1" stop-color="#ffffff"/></linearGradient></defs><rect x="0" y="0" width="14" height="14" fill="url(#vg)"/><path d="M0.5,13.5 V0.5 H13.5" fill="none" stroke="#a3b5d3" stroke-width="1"/><path d="M0,13.5 H13.5 V0" fill="none" stroke="#2d4270" stroke-width="1"/><path d="M1.8,7 H3.05 L3.55,9.9 L4.05,7 H5.3 L4.2,12 H2.9 Z" fill="#0b45a3"/><path d="M9,7.6 H7.4 Q6.4,7.6 6.4,8.6 V10.4 Q6.4,11.4 7.4,11.4 H9" fill="none" stroke="#0b45a3" stroke-width="1.25"/><path d="M10.4,7 V11.4 H12.6" fill="none" stroke="#0b45a3" stroke-width="1.25"/></svg>
<div class="t" style="left:120px;top:497px;line-height:19px;letter-spacing:-0.22px">VCLObject(&quot;Records_NewOrder&quot;)</div>
<div style="left:90px;top:524px;width:10px;height:1px;background:repeating-linear-gradient(90deg,#a0a0a0 0 1px,transparent 1px 2px)"></div>
<svg style="position:absolute;left:101px;top:518px;" width="14" height="14" viewBox="0 0 14 14"><defs><linearGradient id="vg" x1="0" y1="0" x2="1" y2="1"><stop offset="0" stop-color="#ffffff"/><stop offset="0.5" stop-color="#eef2f9"/><stop offset="1" stop-color="#ffffff"/></linearGradient></defs><rect x="0" y="0" width="14" height="14" fill="url(#vg)"/><path d="M0.5,13.5 V0.5 H13.5" fill="none" stroke="#a3b5d3" stroke-width="1"/><path d="M0,13.5 H13.5 V0" fill="none" stroke="#2d4270" stroke-width="1"/><path d="M1.8,7 H3.05 L3.55,9.9 L4.05,7 H5.3 L4.2,12 H2.9 Z" fill="#0b45a3"/><path d="M9,7.6 H7.4 Q6.4,7.6 6.4,8.6 V10.4 Q6.4,11.4 7.4,11.4 H9" fill="none" stroke="#0b45a3" stroke-width="1.25"/><path d="M10.4,7 V11.4 H12.6" fill="none" stroke="#0b45a3" stroke-width="1.25"/></svg>
<div class="t" style="left:120px;top:516px;line-height:19px;letter-spacing:-0.22px">VCLObject(&quot;Records_WorkWithBugs&quot;)</div>
<div style="left:90px;top:543px;width:10px;height:1px;background:repeating-linear-gradient(90deg,#a0a0a0 0 1px,transparent 1px 2px)"></div>
<svg style="position:absolute;left:101px;top:537px;" width="14" height="14" viewBox="0 0 14 14"><defs><linearGradient id="vg" x1="0" y1="0" x2="1" y2="1"><stop offset="0" stop-color="#ffffff"/><stop offset="0.5" stop-color="#eef2f9"/><stop offset="1" stop-color="#ffffff"/></linearGradient></defs><rect x="0" y="0" width="14" height="14" fill="url(#vg)"/><path d="M0.5,13.5 V0.5 H13.5" fill="none" stroke="#a3b5d3" stroke-width="1"/><path d="M0,13.5 H13.5 V0" fill="none" stroke="#2d4270" stroke-width="1"/><path d="M1.8,7 H3.05 L3.55,9.9 L4.05,7 H5.3 L4.2,12 H2.9 Z" fill="#0b45a3"/><path d="M9,7.6 H7.4 Q6.4,7.6 6.4,8.6 V10.4 Q6.4,11.4 7.4,11.4 H9" fill="none" stroke="#0b45a3" stroke-width="1.25"/><path d="M10.4,7 V11.4 H12.6" fill="none" stroke="#0b45a3" stroke-width="1.25"/></svg>
<div class="t" style="left:120px;top:535px;line-height:19px;letter-spacing:-0.22px">VCLObject(&quot;Report&quot;)</div>
<div style="left:90px;top:562px;width:10px;height:1px;background:repeating-linear-gradient(90deg,#a0a0a0 0 1px,transparent 1px 2px)"></div>
<svg style="position:absolute;left:101px;top:556px;" width="14" height="14" viewBox="0 0 14 14"><defs><linearGradient id="vg" x1="0" y1="0" x2="1" y2="1"><stop offset="0" stop-color="#ffffff"/><stop offset="0.5" stop-color="#eef2f9"/><stop offset="1" stop-color="#ffffff"/></linearGradient></defs><rect x="0" y="0" width="14" height="14" fill="url(#vg)"/><path d="M0.5,13.5 V0.5 H13.5" fill="none" stroke="#a3b5d3" stroke-width="1"/><path d="M0,13.5 H13.5 V0" fill="none" stroke="#2d4270" stroke-width="1"/><path d="M1.8,7 H3.05 L3.55,9.9 L4.05,7 H5.3 L4.2,12 H2.9 Z" fill="#0b45a3"/><path d="M9,7.6 H7.4 Q6.4,7.6 6.4,8.6 V10.4 Q6.4,11.4 7.4,11.4 H9" fill="none" stroke="#0b45a3" stroke-width="1.25"/><path d="M10.4,7 V11.4 H12.6" fill="none" stroke="#0b45a3" stroke-width="1.25"/></svg>
<div class="t" style="left:120px;top:554px;line-height:19px;letter-spacing:-0.22px">VCLObject(&quot;Report_CustomerList&quot;)</div>
<div style="left:90px;top:581px;width:10px;height:1px;background:repeating-linear-gradient(90deg,#a0a0a0 0 1px,transparent 1px 2px)"></div>
<svg style="position:absolute;left:101px;top:575px;" width="14" height="14" viewBox="0 0 14 14"><defs><linearGradient id="vg" x1="0" y1="0" x2="1" y2="1"><stop offset="0" stop-color="#ffffff"/><stop offset="0.5" stop-color="#eef2f9"/><stop offset="1" stop-color="#ffffff"/></linearGradient></defs><rect x="0" y="0" width="14" height="14" fill="url(#vg)"/><path d="M0.5,13.5 V0.5 H13.5" fill="none" stroke="#a3b5d3" stroke-width="1"/><path d="M0,13.5 H13.5 V0" fill="none" stroke="#2d4270" stroke-width="1"/><path d="M1.8,7 H3.05 L3.55,9.9 L4.05,7 H5.3 L4.2,12 H2.9 Z" fill="#0b45a3"/><path d="M9,7.6 H7.4 Q6.4,7.6 6.4,8.6 V10.4 Q6.4,11.4 7.4,11.4 H9" fill="none" stroke="#0b45a3" stroke-width="1.25"/><path d="M10.4,7 V11.4 H12.6" fill="none" stroke="#0b45a3" stroke-width="1.25"/></svg>
<div class="t" style="left:120px;top:573px;line-height:19px;letter-spacing:-0.22px">VCLObject(&quot;SaveDialog&quot;)</div>
<div style="left:90px;top:600px;width:10px;height:1px;background:repeating-linear-gradient(90deg,#a0a0a0 0 1px,transparent 1px 2px)"></div>
<svg style="position:absolute;left:101px;top:594px;" width="14" height="14" viewBox="0 0 14 14"><defs><linearGradient id="vg" x1="0" y1="0" x2="1" y2="1"><stop offset="0" stop-color="#ffffff"/><stop offset="0.5" stop-color="#eef2f9"/><stop offset="1" stop-color="#ffffff"/></linearGradient></defs><rect x="0" y="0" width="14" height="14" fill="url(#vg)"/><path d="M0.5,13.5 V0.5 H13.5" fill="none" stroke="#a3b5d3" stroke-width="1"/><path d="M0,13.5 H13.5 V0" fill="none" stroke="#2d4270" stroke-width="1"/><path d="M1.8,7 H3.05 L3.55,9.9 L4.05,7 H5.3 L4.2,12 H2.9 Z" fill="#0b45a3"/><path d="M9,7.6 H7.4 Q6.4,7.6 6.4,8.6 V10.4 Q6.4,11.4 7.4,11.4 H9" fill="none" stroke="#0b45a3" stroke-width="1.25"/><path d="M10.4,7 V11.4 H12.6" fill="none" stroke="#0b45a3" stroke-width="1.25"/></svg>
<div class="t" style="left:120px;top:592px;line-height:19px;letter-spacing:-0.22px">VCLObject(&quot;StatusBar1&quot;)</div>
<div style="left:90px;top:619px;width:10px;height:1px;background:repeating-linear-gradient(90deg,#a0a0a0 0 1px,transparent 1px 2px)"></div>
<svg style="position:absolute;left:101px;top:613px;" width="14" height="14" viewBox="0 0 14 14"><defs><linearGradient id="vg" x1="0" y1="0" x2="1" y2="1"><stop offset="0" stop-color="#ffffff"/><stop offset="0.5" stop-color="#eef2f9"/><stop offset="1" stop-color="#ffffff"/></linearGradient></defs><rect x="0" y="0" width="14" height="14" fill="url(#vg)"/><path d="M0.5,13.5 V0.5 H13.5" fill="none" stroke="#a3b5d3" stroke-width="1"/><path d="M0,13.5 H13.5 V0" fill="none" stroke="#2d4270" stroke-width="1"/><path d="M1.8,7 H3.05 L3.55,9.9 L4.05,7 H5.3 L4.2,12 H2.9 Z" fill="#0b45a3"/><path d="M9,7.6 H7.4 Q6.4,7.6 6.4,8.6 V10.4 Q6.4,11.4 7.4,11.4 H9" fill="none" stroke="#0b45a3" stroke-width="1.25"/><path d="M10.4,7 V11.4 H12.6" fill="none" stroke="#0b45a3" stroke-width="1.25"/></svg>
<div class="t" style="left:120px;top:611px;line-height:19px;letter-spacing:-0.22px">VCLObject(&quot;tlb_Details&quot;)</div>
<div style="left:384px;top:21px;width:511px;height:611px;background:#f0f0f0"></div>
<div style="left:384px;top:21px;width:509px;height:2px;background:#fff"></div>
<div style="left:893px;top:21px;width:2px;height:611px;background:#fff"></div>
<div style="left:895px;top:20px;width:1px;height:612px;background:#828790"></div>
<div style="left:384px;top:630px;width:511px;height:2px;background:#fff"></div>
<svg style="position:absolute;left:392px;top:35px;" width="25" height="25" viewBox="0 0 25 25"><defs><linearGradient id="bb" x1="0" y1="0" x2="0" y2="1"><stop offset="0" stop-color="#f8fafb"/><stop offset="1" stop-color="#e0e3e6"/></linearGradient><linearGradient id="bbs" x1="0" y1="0" x2="0" y2="1"><stop offset="0" stop-color="#c4c8cd"/><stop offset="1" stop-color="#535965"/></linearGradient></defs><circle cx="12.4" cy="12.4" r="11.7" fill="url(#bb)" stroke="url(#bbs)" stroke-width="1.3"/><path d="M4.6,12.4 L10.3,6.6 Q11.3,5.8 11.9,6.8 L11.9,9.9 H17.6 Q19.9,9.9 19.9,12.4 Q19.9,14.9 17.6,14.9 H11.9 V18 Q11.3,19 10.3,18.2 Z" fill="#f4f6f7" stroke="#cdd1d6" stroke-width="0.8"/></svg>
<div class="t" style="left:426px;top:39px;line-height:19px;letter-spacing:-0.15px">ers&quot;).VCLObject(&quot;MainForm&quot;).VCLObject(&quot;ListView&quot;).Checkboxes</div>
<div style="left:743px;top:38px;width:146px;height:21px;border:1px solid #abadb3;border-left-color:#e2e3ea;border-right-color:#dbdfe6;border-bottom-color:#e3e9ef;box-sizing:border-box;background:#fff;border-radius:2px"></div>
<div class="t" style="left:746px;top:39px;line-height:19px;font-style:italic;color:#505050;letter-spacing:-0.15px">Search</div>
<svg style="position:absolute;left:856px;top:42px;" width="14" height="14" viewBox="0 0 14 14"><circle cx="9" cy="4.8" r="3.6" fill="none" stroke="#0a5fd1" stroke-width="2"/><path d="M6.3,7.5 L1,12.6" stroke="#0a5fd1" stroke-width="2.2" stroke-linecap="round"/></svg>
<svg style="position:absolute;left:872px;top:40px;" width="14" height="16" viewBox="0 0 14 16"><rect x="0.5" y="0.5" width="13" height="15" rx="2" fill="#f4f4f4" stroke="#a8a8a8" stroke-width="1"/><path d="M3.5,6.5 L10.5,6.5 L7,10 Z" fill="#8a8a8a"/></svg>
<div style="left:388px;top:84px;width:503px;height:456px;border:1px solid #898c95;box-sizing:border-box;background:#fbfbfb"></div>
<div style="left:389px;top:85px;width:501px;height:3px;background:#fff"></div>
<div style="left:452px;top:66px;width:40px;height:19px;border:1px solid #898c95;border-bottom:none;box-sizing:border-box;background:linear-gradient(#f3f3f3,#ececec 50%,#dddddd 51%,#d2d2d2)"></div>
<div style="left:493px;top:66px;width:51px;height:19px;border:1px solid #898c95;border-bottom:none;box-sizing:border-box;background:linear-gradient(#f3f3f3,#ececec 50%,#dddddd 51%,#d2d2d2)"></div>
<div style="left:388px;top:64px;width:65px;height:21px;border:1px solid #898c95;border-bottom:none;box-sizing:border-box;background:#fff"></div>
<div class="t" style="left:395px;top:64px;line-height:19px;letter-spacing:-0.1px">Properties</div>
<div class="t" style="left:457px;top:67px;line-height:19px;letter-spacing:-0.3px">Fields</div>
<div class="t" style="left:498px;top:67px;line-height:19px;">Methods</div>
<div style="left:392px;top:88px;width:497px;height:25px;background:#aaaaaa"></div>
<div style="left:392px;top:113px;width:497px;height:1px;background:#8e949c"></div>
<div class="t" style="left:400px;top:87px;line-height:27px;font-weight:bold;font-size:11.5px;color:#fff;letter-spacing:0.15px">Advanced view</div>
<div class="t" style="left:509px;top:87px;line-height:27px;color:#fff;text-decoration:underline;letter-spacing:-0.28px">View basic members (Basic view)</div>
<div style="left:392px;top:114px;width:480px;height:422px;background:#f0f0f0"></div>
<div style="left:392px;top:114px;width:1px;height:422px;background:#8e8f8f"></div>
<svg style="position:absolute;left:395px;top:119px;" width="9" height="9" viewBox="0 0 9 9"><defs><linearGradient id="eb" x1="0" y1="0" x2="0" y2="1"><stop offset="0" stop-color="#ffffff"/><stop offset="0.5" stop-color="#f4f4f4"/><stop offset="1" stop-color="#e4e4e4"/></linearGradient></defs><rect x="0.5" y="0.5" width="8" height="8" rx="1.3" fill="url(#eb)" stroke="#919191" stroke-width="1"/><rect x="2" y="4" width="5" height="1" fill="#2f4f99"/><rect x="4" y="2" width="1" height="5" fill="#2f4f99"/></svg>
<div class="t" style="left:408px;top:115px;line-height:18px;font-weight:bold;font-size:11.5px;color:#626262;letter-spacing:0.6px">Standard</div>
<svg style="position:absolute;left:395px;top:137px;" width="9" height="9" viewBox="0 0 9 9"><defs><linearGradient id="eb" x1="0" y1="0" x2="0" y2="1"><stop offset="0" stop-color="#ffffff"/><stop offset="0.5" stop-color="#f4f4f4"/><stop offset="1" stop-color="#e4e4e4"/></linearGradient></defs><rect x="0.5" y="0.5" width="8" height="8" rx="1.3" fill="url(#eb)" stroke="#919191" stroke-width="1"/><rect x="2" y="4" width="5" height="1" fill="#2f4f99"/><rect x="4" y="2" width="1" height="5" fill="#2f4f99"/></svg>
<div class="t" style="left:408px;top:133px;line-height:18px;font-weight:bold;font-size:11.5px;color:#626262;letter-spacing:0.5px">Extended</div>
<svg style="position:absolute;left:395px;top:155px;" width="9" height="9" viewBox="0 0 9 9"><defs><linearGradient id="eb" x1="0" y1="0" x2="0" y2="1"><stop offset="0" stop-color="#ffffff"/><stop offset="0.5" stop-color="#f4f4f4"/><stop offset="1" stop-color="#e4e4e4"/></linearGradient></defs><rect x="0.5" y="0.5" width="8" height="8" rx="1.3" fill="url(#eb)" stroke="#919191" stroke-width="1"/><rect x="2" y="4" width="5" height="1" fill="#2f4f99"/><rect x="4" y="2" width="1" height="5" fill="#2f4f99"/></svg>
<div class="t" style="left:408px;top:151px;line-height:18px;font-weight:bold;font-size:11.5px;color:#626262;letter-spacing:0.22px">Debug Agent</div>
<svg style="position:absolute;left:395px;top:173px;" width="9" height="9" viewBox="0 0 9 9"><defs><linearGradient id="eb" x1="0" y1="0" x2="0" y2="1"><stop offset="0" stop-color="#ffffff"/><stop offset="0.5" stop-color="#f4f4f4"/><stop offset="1" stop-color="#e4e4e4"/></linearGradient></defs><rect x="0.5" y="0.5" width="8" height="8" rx="1.3" fill="url(#eb)" stroke="#919191" stroke-width="1"/><rect x="2" y="4" width="5" height="1" fill="#2f4f99"/></svg>
<div class="t" style="left:408px;top:169px;line-height:18px;font-weight:bold;font-size:11.5px;color:#626262;letter-spacing:0.8px">RTTI</div>
<div style="left:722px;top:187px;width:149px;height:17px;background:#fff"></div>
<svg style="position:absolute;left:410px;top:193px;" width="6" height="6" viewBox="0 0 6 6"><circle cx="3" cy="3" r="2.25" fill="none" stroke="#969088" stroke-width="1.4"/></svg>
<div class="t" style="left:421px;top:188px;line-height:17px;color:#000;letter-spacing:-0.1px">Action</div>
<div class="t" style="left:723px;top:188px;line-height:17px;letter-spacing:-0.1px">(Null Object)</div>
<div style="left:722px;top:205px;width:149px;height:17px;background:#fff"></div>
<svg style="position:absolute;left:410px;top:211px;" width="6" height="6" viewBox="0 0 6 6"><circle cx="3" cy="3" r="2.25" fill="none" stroke="#969088" stroke-width="1.4"/></svg>
<div class="t" style="left:421px;top:206px;line-height:17px;color:#000;letter-spacing:-0.1px">Align</div>
<div class="t" style="left:723px;top:206px;line-height:17px;letter-spacing:-0.1px">5</div>
<div style="left:722px;top:223px;width:149px;height:17px;background:#fff"></div>
<svg style="position:absolute;left:410px;top:229px;" width="6" height="6" viewBox="0 0 6 6"><circle cx="3" cy="3" r="2.25" fill="none" stroke="#969088" stroke-width="1.4"/></svg>
<div class="t" style="left:421px;top:224px;line-height:17px;color:#000;letter-spacing:-0.1px">AllocBy</div>
<div class="t" style="left:723px;top:224px;line-height:17px;letter-spacing:-0.1px">0</div>
<div style="left:722px;top:241px;width:149px;height:17px;background:#fff"></div>
<svg style="position:absolute;left:410px;top:247px;" width="6" height="6" viewBox="0 0 6 6"><circle cx="3" cy="3" r="2.25" fill="none" stroke="#969088" stroke-width="1.4"/></svg>
<div class="t" style="left:421px;top:242px;line-height:17px;color:#000;letter-spacing:-0.1px">Anchors</div>
<div class="t" style="left:723px;top:242px;line-height:17px;letter-spacing:-0.1px">15</div>
<div style="left:722px;top:259px;width:149px;height:17px;background:#fff"></div>
<svg style="position:absolute;left:410px;top:265px;" width="6" height="6" viewBox="0 0 6 6"><circle cx="3" cy="3" r="2.25" fill="none" stroke="#969088" stroke-width="1.4"/></svg>
<div class="t" style="left:421px;top:260px;line-height:17px;color:#000;letter-spacing:-0.1px">BevelEdges</div>
<div class="t" style="left:723px;top:260px;line-height:17px;letter-spacing:-0.1px">15</div>
<div style="left:722px;top:277px;width:149px;height:17px;background:#fff"></div>
<svg style="position:absolute;left:410px;top:283px;" width="6" height="6" viewBox="0 0 6 6"><circle cx="3" cy="3" r="2.25" fill="none" stroke="#969088" stroke-width="1.4"/></svg>
<div class="t" style="left:421px;top:278px;line-height:17px;color:#000;letter-spacing:-0.1px">BevelInner</div>
<div class="t" style="left:723px;top:278px;line-height:17px;letter-spacing:-0.1px">2</div>
<div style="left:722px;top:295px;width:149px;height:17px;background:#fff"></div>
<svg style="position:absolute;left:410px;top:301px;" width="6" height="6" viewBox="0 0 6 6"><circle cx="3" cy="3" r="2.25" fill="none" stroke="#969088" stroke-width="1.4"/></svg>
<div class="t" style="left:421px;top:296px;line-height:17px;color:#000;letter-spacing:-0.1px">BevelKind</div>
<div class="t" style="left:723px;top:296px;line-height:17px;letter-spacing:-0.1px">0</div>
<div style="left:722px;top:313px;width:149px;height:17px;background:#fff"></div>
<svg style="position:absolute;left:410px;top:319px;" width="6" height="6" viewBox="0 0 6 6"><circle cx="3" cy="3" r="2.25" fill="none" stroke="#969088" stroke-width="1.4"/></svg>
<div class="t" style="left:421px;top:314px;line-height:17px;color:#000;letter-spacing:-0.1px">BevelOuter</div>
<div class="t" style="left:723px;top:314px;line-height:17px;letter-spacing:-0.1px">1</div>
<div style="left:722px;top:331px;width:149px;height:17px;background:#fff"></div>
<svg style="position:absolute;left:410px;top:337px;" width="6" height="6" viewBox="0 0 6 6"><circle cx="3" cy="3" r="2.25" fill="none" stroke="#969088" stroke-width="1.4"/></svg>
<div class="t" style="left:421px;top:332px;line-height:17px;color:#000;letter-spacing:-0.1px">BevelWidth</div>
<div class="t" style="left:723px;top:332px;line-height:17px;letter-spacing:-0.1px">1</div>
<div style="left:722px;top:349px;width:149px;height:17px;background:#fff"></div>
<svg style="position:absolute;left:410px;top:355px;" width="6" height="6" viewBox="0 0 6 6"><circle cx="3" cy="3" r="2.25" fill="none" stroke="#969088" stroke-width="1.4"/></svg>
<div class="t" style="left:421px;top:350px;line-height:17px;color:#000;letter-spacing:-0.1px">BiDiMode</div>
<div class="t" style="left:723px;top:350px;line-height:17px;letter-spacing:-0.1px">0</div>
<div style="left:722px;top:367px;width:149px;height:17px;background:#fff"></div>
<svg style="position:absolute;left:410px;top:373px;" width="6" height="6" viewBox="0 0 6 6"><circle cx="3" cy="3" r="2.25" fill="none" stroke="#969088" stroke-width="1.4"/></svg>
<div class="t" style="left:421px;top:368px;line-height:17px;color:#000;letter-spacing:-0.1px">BorderStyle</div>
<div class="t" style="left:723px;top:368px;line-height:17px;letter-spacing:-0.1px">1</div>
<div style="left:722px;top:385px;width:149px;height:17px;background:#fff"></div>
<svg style="position:absolute;left:410px;top:391px;" width="6" height="6" viewBox="0 0 6 6"><circle cx="3" cy="3" r="2.25" fill="none" stroke="#969088" stroke-width="1.4"/></svg>
<div class="t" style="left:421px;top:386px;line-height:17px;color:#000;letter-spacing:-0.1px">BorderWidth</div>
<div class="t" style="left:723px;top:386px;line-height:17px;letter-spacing:-0.1px">0</div>
<div style="left:406px;top:403px;width:316px;height:17px;background:#3399ff"></div>
<div style="left:722px;top:403px;width:149px;height:17px;background:#fff"></div>
<svg style="position:absolute;left:410px;top:409px;" width="6" height="6" viewBox="0 0 6 6"><circle cx="3" cy="3" r="2.25" fill="none" stroke="#969088" stroke-width="1.4"/></svg>
<div class="t" style="left:421px;top:404px;line-height:17px;color:#fff;letter-spacing:-0.1px">Checkboxes</div>
<div class="t" style="left:723px;top:404px;line-height:17px;letter-spacing:-0.1px">False</div>
<div style="left:722px;top:403px;width:149px;height:17px;border:1px dotted #000;box-sizing:border-box"></div>
<div style="left:722px;top:421px;width:149px;height:17px;background:#fff"></div>
<svg style="position:absolute;left:410px;top:427px;" width="6" height="6" viewBox="0 0 6 6"><circle cx="3" cy="3" r="2.25" fill="none" stroke="#969088" stroke-width="1.4"/></svg>
<div class="t" style="left:421px;top:422px;line-height:17px;color:#000;letter-spacing:-0.1px">Color</div>
<div class="t" style="left:723px;top:422px;line-height:17px;letter-spacing:-0.1px">-2147483643</div>
<div style="left:722px;top:439px;width:149px;height:17px;background:#fff"></div>
<svg style="position:absolute;left:410px;top:445px;" width="6" height="6" viewBox="0 0 6 6"><circle cx="3" cy="3" r="2.25" fill="none" stroke="#969088" stroke-width="1.4"/></svg>
<div class="t" style="left:421px;top:440px;line-height:17px;color:#000;letter-spacing:-0.1px">ColumnClick</div>
<div class="t" style="left:723px;top:440px;line-height:17px;letter-spacing:-0.1px">True</div>
<div style="left:722px;top:457px;width:149px;height:18px;background:#fff"></div>
<svg style="position:absolute;left:410px;top:464px;" width="6" height="6" viewBox="0 0 6 6"><circle cx="3" cy="3" r="2.25" fill="none" stroke="#969088" stroke-width="1.4"/></svg>
<div class="t" style="left:421px;top:458px;line-height:17px;color:#000;letter-spacing:-0.1px">Columns</div>
<div class="t" style="left:723px;top:458px;line-height:17px;letter-spacing:-0.1px">(Object)</div>
<svg style="position:absolute;left:854px;top:459px;" width="15" height="14" viewBox="0 0 15 14"><defs><linearGradient id="el" x1="0" y1="0" x2="0" y2="1"><stop offset="0" stop-color="#f6f6f6"/><stop offset="0.45" stop-color="#ececec"/><stop offset="1" stop-color="#cfcfcf"/></linearGradient></defs><rect x="0.5" y="0.5" width="14" height="13" rx="2.5" fill="url(#el)" stroke="#767676" stroke-width="1"/><rect x="1.5" y="1.5" width="12" height="11" rx="1.8" fill="none" stroke="#fafafa" stroke-width="0.8" opacity="0.8"/><rect x="4" y="6" width="1" height="1" fill="#333"/><rect x="7" y="6" width="1" height="1" fill="#333"/><rect x="10" y="6" width="1" height="1" fill="#333"/></svg>
<div style="left:722px;top:476px;width:149px;height:18px;background:#fff"></div>
<svg style="position:absolute;left:410px;top:483px;" width="6" height="6" viewBox="0 0 6 6"><circle cx="3" cy="3" r="2.25" fill="none" stroke="#969088" stroke-width="1.4"/></svg>
<div class="t" style="left:421px;top:477px;line-height:17px;color:#000;letter-spacing:-0.1px">Constraints</div>
<div class="t" style="left:723px;top:477px;line-height:17px;letter-spacing:-0.1px">(Object)</div>
<svg style="position:absolute;left:854px;top:478px;" width="15" height="14" viewBox="0 0 15 14"><defs><linearGradient id="el" x1="0" y1="0" x2="0" y2="1"><stop offset="0" stop-color="#f6f6f6"/><stop offset="0.45" stop-color="#ececec"/><stop offset="1" stop-color="#cfcfcf"/></linearGradient></defs><rect x="0.5" y="0.5" width="14" height="13" rx="2.5" fill="url(#el)" stroke="#767676" stroke-width="1"/><rect x="1.5" y="1.5" width="12" height="11" rx="1.8" fill="none" stroke="#fafafa" stroke-width="0.8" opacity="0.8"/><rect x="4" y="6" width="1" height="1" fill="#333"/><rect x="7" y="6" width="1" height="1" fill="#333"/><rect x="10" y="6" width="1" height="1" fill="#333"/></svg>
<div style="left:722px;top:495px;width:149px;height:17px;background:#fff"></div>
<svg style="position:absolute;left:410px;top:501px;" width="6" height="6" viewBox="0 0 6 6"><circle cx="3" cy="3" r="2.25" fill="none" stroke="#969088" stroke-width="1.4"/></svg>
<div class="t" style="left:421px;top:496px;line-height:17px;color:#000;letter-spacing:-0.1px">Ctl3D</div>
<div class="t" style="left:723px;top:496px;line-height:17px;letter-spacing:-0.1px">True</div>
<div style="left:722px;top:513px;width:149px;height:17px;background:#fff"></div>
<svg style="position:absolute;left:410px;top:519px;" width="6" height="6" viewBox="0 0 6 6"><circle cx="3" cy="3" r="2.25" fill="none" stroke="#969088" stroke-width="1.4"/></svg>
<div class="t" style="left:421px;top:514px;line-height:17px;color:#000;letter-spacing:-0.1px">Cursor</div>
<div class="t" style="left:723px;top:514px;line-height:17px;letter-spacing:-0.1px">0</div>
<div style="left:722px;top:531px;width:149px;height:5px;background:#fff"></div>
<div style="left:406px;top:531px;width:316px;height:5px;background:#f0f0f0"></div>
<div style="left:392px;top:132px;width:479px;height:1px;background:#a0a0a0"></div>
<div style="left:392px;top:150px;width:479px;height:1px;background:#a0a0a0"></div>
<div style="left:392px;top:168px;width:479px;height:1px;background:#a0a0a0"></div>
<div style="left:406px;top:186px;width:465px;height:1px;background:#a0a0a0"></div>
<div style="left:406px;top:204px;width:465px;height:1px;background:#a0a0a0"></div>
<div style="left:406px;top:222px;width:465px;height:1px;background:#a0a0a0"></div>
<div style="left:406px;top:240px;width:465px;height:1px;background:#a0a0a0"></div>
<div style="left:406px;top:258px;width:465px;height:1px;background:#a0a0a0"></div>
<div style="left:406px;top:276px;width:465px;height:1px;background:#a0a0a0"></div>
<div style="left:406px;top:294px;width:465px;height:1px;background:#a0a0a0"></div>
<div style="left:406px;top:312px;width:465px;height:1px;background:#a0a0a0"></div>
<div style="left:406px;top:330px;width:465px;height:1px;background:#a0a0a0"></div>
<div style="left:406px;top:348px;width:465px;height:1px;background:#a0a0a0"></div>
<div style="left:406px;top:366px;width:465px;height:1px;background:#a0a0a0"></div>
<div style="left:406px;top:384px;width:465px;height:1px;background:#a0a0a0"></div>
<div style="left:406px;top:402px;width:465px;height:1px;background:#a0a0a0"></div>
<div style="left:406px;top:420px;width:465px;height:1px;background:#a0a0a0"></div>
<div style="left:406px;top:438px;width:465px;height:1px;background:#a0a0a0"></div>
<div style="left:406px;top:456px;width:465px;height:1px;background:#a0a0a0"></div>
<div style="left:406px;top:475px;width:465px;height:1px;background:#a0a0a0"></div>
<div style="left:406px;top:494px;width:465px;height:1px;background:#a0a0a0"></div>
<div style="left:406px;top:512px;width:465px;height:1px;background:#a0a0a0"></div>
<div style="left:406px;top:530px;width:465px;height:1px;background:#a0a0a0"></div>
<div style="left:871px;top:114px;width:17px;height:422px;background:linear-gradient(90deg,#e9e9e9,#f1f1f1 25%,#f0f0f0)"></div>
<svg style="position:absolute;left:877px;top:120px;" width="8" height="5" viewBox="0 0 8 5"><defs><linearGradient id="au" x1="0" y1="0" x2="0" y2="1"><stop offset="0" stop-color="#111"/><stop offset="1" stop-color="#777"/></linearGradient></defs><path d="M0,4.8 L3.7,0.6 L7.4,4.8 Z" fill="url(#au)"/></svg>
<svg style="position:absolute;left:877px;top:526px;" width="8" height="5" viewBox="0 0 8 5"><defs><linearGradient id="ad" x1="0" y1="0" x2="0" y2="1"><stop offset="0" stop-color="#111"/><stop offset="1" stop-color="#888"/></linearGradient></defs><path d="M0,0.2 L7.4,0.2 L3.7,4.6 Z" fill="url(#ad)"/></svg>
<div style="left:872px;top:132px;width:15px;height:147px;border:1px solid #929292;border-radius:2px;box-sizing:border-box;background:linear-gradient(90deg,#f8f8f8,#ececec 45%,#dcdcdc 55%,#cfcfd2)"></div>
<svg style="position:absolute;left:876px;top:202px;" width="6" height="6" viewBox="0 0 6 6"><rect x="0" y="0" width="6" height="1" fill="#333" opacity="0.75"/><rect x="0" y="2" width="6" height="1" fill="#333" opacity="0.75"/><rect x="0" y="4" width="6" height="1" fill="#333" opacity="0.75"/></svg>
<div style="left:888px;top:114px;width:1px;height:423px;background:#8e8f8f"></div>
<div style="left:392px;top:536px;width:497px;height:1px;background:#8e8f8f"></div>
<div style="left:392px;top:86px;width:104px;height:29px;border:2px solid #ff0000;box-sizing:border-box"></div>
<div style="left:391px;top:149px;width:481px;height:388px;border:2px solid #ff0000;box-sizing:border-box"></div>
<div style="left:388px;top:551px;width:502px;height:77px;border:1px solid #d5dfe5;border-radius:3px;box-sizing:border-box;box-shadow:inset 1px 1px 0 #fff, 1px 1px 0 #fff"></div>
<div style="left:396px;top:544px;width:58px;height:14px;background:#f0f0f0"></div>
<div class="t" style="left:398px;top:543px;line-height:19px;letter-spacing:0px">Description</div>
<div class="t" style="left:404px;top:561px;line-height:19px;letter-spacing:-0.2px">Public Property Get Checkboxes</div>
</body></html>
